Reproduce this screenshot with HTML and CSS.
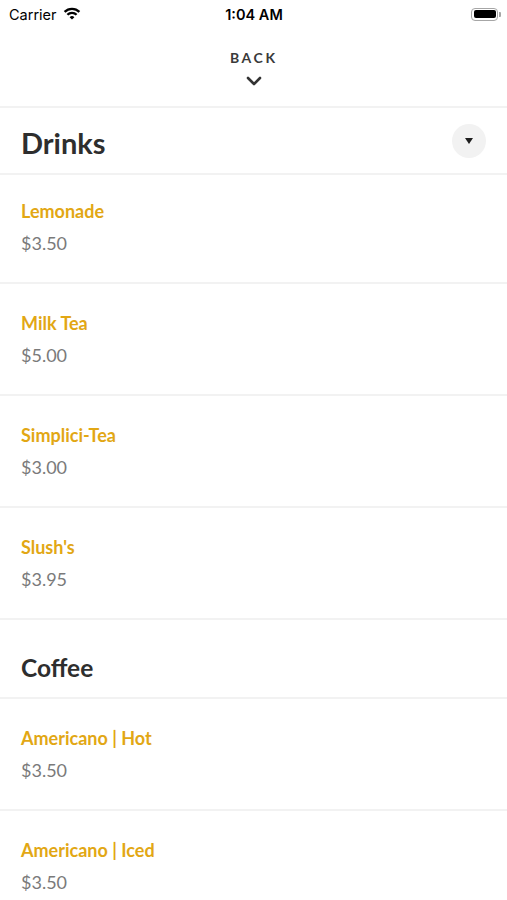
FILE: index.html
```html
<!DOCTYPE html>
<html lang="en">
<head>
<meta charset="utf-8">
<title>Menu</title>
<link rel="stylesheet" href="styles.css">
</head>
<body>
<div class="screen">
  <div class="status-bar">
    <div class="status-left">
      <span class="carrier">Carrier</span>
      <svg class="wifi" width="18" height="13" viewBox="0 0 18 13" aria-hidden="true">
        <path d="M1.6 4.9 A10.5 10.5 0 0 1 16.4 4.9" fill="none" stroke="#000" stroke-width="2.3"/>
        <path d="M4.4 7.7 A6.5 6.5 0 0 1 13.6 7.7" fill="none" stroke="#000" stroke-width="2.3"/>
        <path d="M9 12.6 L6.6 10.2 A3.4 3.4 0 0 1 11.4 10.2 Z" fill="#000"/>
      </svg>
    </div>
    <div class="status-time">1:04 AM</div>
    <div class="status-right">
      <span class="battery"><span class="battery-fill"></span></span><span class="battery-cap"></span>
    </div>
  </div>

  <nav class="back-bar">
    <span class="back-label">BACK</span>
    <svg class="back-chevron" width="16" height="10" viewBox="0 0 16 10" aria-hidden="true">
      <path d="M2 2 L8 8 L14 2" fill="none" stroke="#333" stroke-width="2.6" stroke-linecap="round" stroke-linejoin="round"/>
    </svg>
  </nav>

  <section class="menu-section">
    <header class="section-header section-header--sticky">
      <h2 class="section-title section-title--large">Drinks</h2>
      <button class="section-toggle" aria-label="Collapse">
        <svg width="8" height="6" viewBox="0 0 8 6" aria-hidden="true"><path d="M0 0 H8 L4 6 Z" fill="#1e1e1e"/></svg>
      </button>
    </header>
    <ul class="item-list">
      <li class="item item--first"><span class="item-name">Lemonade</span><span class="item-price">$3.50</span></li>
      <li class="item"><span class="item-name">Milk Tea</span><span class="item-price">$5.00</span></li>
      <li class="item"><span class="item-name">Simplici-Tea</span><span class="item-price">$3.00</span></li>
      <li class="item"><span class="item-name">Slush's</span><span class="item-price">$3.95</span></li>
    </ul>
  </section>

  <section class="menu-section">
    <header class="section-header">
      <h2 class="section-title">Coffee</h2>
    </header>
    <ul class="item-list">
      <li class="item"><span class="item-name">Americano | Hot</span><span class="item-price">$3.50</span></li>
      <li class="item"><span class="item-name">Americano | Iced</span><span class="item-price">$3.50</span></li>
    </ul>
  </section>
</div>
</body>
</html>
```
FILE: styles.css
```css
* { box-sizing: border-box; }

html, body {
  margin: 0;
  padding: 0;
  background: #fff;
}

body {
  font-family: Lato, "Open Sans", sans-serif;
  color: #333;
}

.screen {
  width: 507px;
  height: 900px;
  overflow: hidden;
}

/* Status bar */
.status-bar {
  height: 28px;
  display: grid;
  grid-template-columns: 1fr auto 1fr;
  align-items: center;
  padding: 0 6px 0 9px;
  font-family: Inter, Roboto, "Liberation Sans", sans-serif;
  color: #000;
}

.status-left {
  display: flex;
  align-items: center;
  gap: 6px;
  padding-top: 1px;
}

.carrier {
  font-size: 14.5px;
}

.wifi { display: block; margin-top: -2px; }

.status-time {
  font-size: 14.5px;
  font-weight: 600;
  padding-top: 1px;
  padding-right: 2px;
}

.status-right {
  display: flex;
  justify-content: flex-end;
  align-items: center;
}

.battery {
  width: 27px;
  height: 13px;
  border: 1px solid #a6a6a6;
  border-radius: 4px;
  padding: 1.5px;
  display: flex;
}

.battery-fill {
  flex: 1;
  background: #000;
  border-radius: 2px;
}

.battery-cap {
  width: 2px;
  height: 5px;
  background: #a6a6a6;
  border-radius: 0 1px 1px 0;
  margin-left: 1px;
}

/* Back bar */
.back-bar {
  height: 80px;
  border-bottom: 2px solid #f2f2f2;
  display: flex;
  flex-direction: column;
  align-items: center;
  padding-top: 21px;
}

.back-label {
  font-size: 14px;
  line-height: 17px;
  font-weight: 700;
  letter-spacing: 2.6px;
  padding-left: 2.6px;
  color: #3a3a3a;
  margin-left: -2px;
}

.back-chevron {
  display: block;
  margin-top: 10px;
}

/* Sections */
.section-header {
  display: flex;
  align-items: center;
  justify-content: space-between;
  padding: 33px 21px 14px;
  border-bottom: 2px solid #f2f2f2;
}

.section-header--sticky {
  height: 67px;
  padding: 0 21px;
}

.section-title {
  margin: 0;
  font-size: 24.5px;
  line-height: 30px;
  font-weight: 700;
  color: #2e2e2e;
}

.section-title--large {
  font-size: 29px;
  line-height: 34px;
  padding-top: 4px;
}

.section-toggle {
  width: 34px;
  height: 34px;
  border-radius: 50%;
  border: 0;
  padding: 0;
  background: #f2f2f2;
  display: flex;
  align-items: center;
  justify-content: center;
}

.section-toggle svg { display: block; }

.item-list {
  list-style: none;
  margin: 0;
  padding: 0;
}

.item {
  display: flex;
  flex-direction: column;
  gap: 10px;
  padding: 28px 21px;
  border-bottom: 2px solid #f2f2f2;
}

.item--first {
  padding-top: 25px;
}

.item-name {
  font-size: 18px;
  line-height: 22px;
  font-weight: 700;
  color: #e2a714;
}

.item-price {
  font-size: 18px;
  line-height: 22px;
  font-weight: 400;
  color: #7a7a7a;
}
```
